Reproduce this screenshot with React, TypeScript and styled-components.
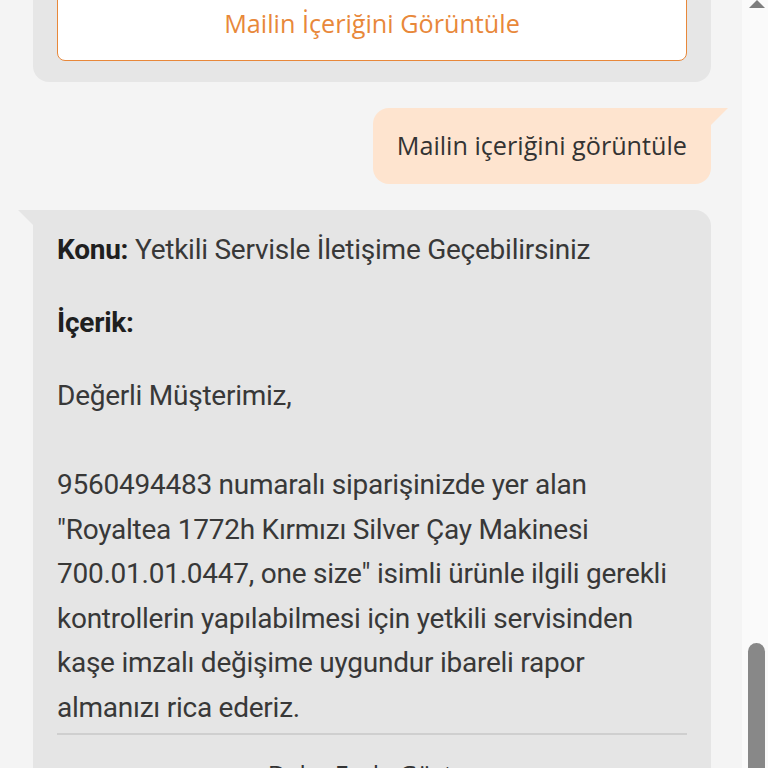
import styled, { createGlobalStyle } from 'styled-components'

const GlobalStyle = createGlobalStyle`
  html, body {
    margin: 0;
    padding: 0;
    background: #f4f4f4;
    overflow: hidden;
  }
`

const Page = styled.div`
  display: flex;
  width: 768px;
  height: 768px;
  overflow: hidden;
  background: #f4f4f4;
`

const Chat = styled.div`
  flex: 1;
  display: flex;
  flex-direction: column;
  gap: 26px;
  padding: 0 31px 0 33px;
  margin-top: -35px;
`

const ActionCard = styled.div`
  background: #e6e6e6;
  border-radius: 16px;
  padding: 24px 24px 21px;
`

const OutlineButton = styled.button`
  display: block;
  width: 100%;
  height: 72px;
  padding: 0 0 4px;
  border: 1.5px solid #e8883a;
  border-radius: 8px;
  background: #fff;
  color: #e8883a;
  font-family: 'Open Sans', 'Noto Sans', sans-serif;
  font-size: 25.2px;
  line-height: 30px;
  cursor: pointer;
`

const Bubble = styled.div<{ side: 'left' | 'right' }>`
  position: relative;
  align-self: ${(p) => (p.side === 'right' ? 'flex-end' : 'stretch')};
  background: ${(p) => (p.side === 'right' ? '#fee4cf' : '#e5e5e5')};
  border-radius: ${(p) => (p.side === 'right' ? '16px 0 16px 16px' : '0 16px 16px 16px')};

  &::before {
    content: '';
    position: absolute;
    top: 0;
    width: 17px;
    height: 17px;
    background: inherit;
    ${(p) =>
      p.side === 'right'
        ? 'right: -17px; clip-path: polygon(0 0, 100% 0, 0 100%);'
        : 'left: -15px; clip-path: polygon(0 0, 100% 0, 100% 100%);'}
  }
`

const UserText = styled.div`
  padding: 22px 24px 24px;
  font-family: 'Open Sans', 'Noto Sans', sans-serif;
  font-size: 25.2px;
  line-height: 30px;
  color: #333;
`

const MailBody = styled.div`
  padding: 18px 24px 0;
  font-family: 'Roboto', 'Liberation Sans', sans-serif;
  font-size: 28px;
  line-height: 44.5px;
  letter-spacing: -0.25px;
  color: #383838;
`

const Para = styled.p<{ $last?: boolean }>`
  margin: 0 0 ${(p) => (p.$last ? '0' : '28.5px')};
`

const Label = styled.b`
  font-weight: 700;
  color: #1f1f1f;
`

const Divider = styled.hr`
  margin: 3px 0 0;
  border: 0;
  border-top: 2px solid #cfcfcf;
`

const MoreButton = styled.div`
  padding: 24px 0 20px;
  text-align: center;
  font-family: 'Open Sans', 'Noto Sans', sans-serif;
  font-size: 25.2px;
  line-height: 30px;
  color: #333;
`

const ScrollTrack = styled.div`
  width: 26px;
  flex-shrink: 0;
  display: flex;
  flex-direction: column;
  align-items: center;
  background: #fafafa;
  padding-left: 3px;
  box-sizing: border-box;
`

const ArrowUp = styled.div`
  width: 0;
  height: 0;
  border-left: 8px solid transparent;
  border-right: 8px solid transparent;
  border-bottom: 8px solid #7d7d7d;
`

const Thumb = styled.div`
  margin-top: auto;
  width: 17px;
  height: 125px;
  border-radius: 9px 9px 0 0;
  background: #888;
`

export default function App() {
  return (
    <Page>
      <GlobalStyle />
      <Chat>
        <ActionCard>
          <OutlineButton>Mailin İçeriğini Görüntüle</OutlineButton>
        </ActionCard>

        <Bubble side="right">
          <UserText>Mailin içeriğini görüntüle</UserText>
        </Bubble>

        <Bubble side="left">
          <MailBody>
            <Para>
              <Label>Konu:</Label> Yetkili Servisle İletişime Geçebilirsiniz
            </Para>
            <Para>
              <Label>İçerik:</Label>
            </Para>
            <Para $last>
              Değerli Müşterimiz,
              <br />
              <br />
              9560494483 numaralı siparişinizde yer alan
              <br />
              "Royaltea 1772h Kırmızı Silver Çay Makinesi
              <br />
              700.01.01.0447, one size" isimli ürünle ilgili gerekli
              <br />
              kontrollerin yapılabilmesi için yetkili servisinden
              <br />
              kaşe imzalı değişime uygundur ibareli rapor
              <br />
              almanızı rica ederiz.
            </Para>
            <Divider />
            <MoreButton>Daha Fazla Göster</MoreButton>
          </MailBody>
        </Bubble>
      </Chat>
      <ScrollTrack>
        <ArrowUp />
        <Thumb />
      </ScrollTrack>
    </Page>
  )
}
